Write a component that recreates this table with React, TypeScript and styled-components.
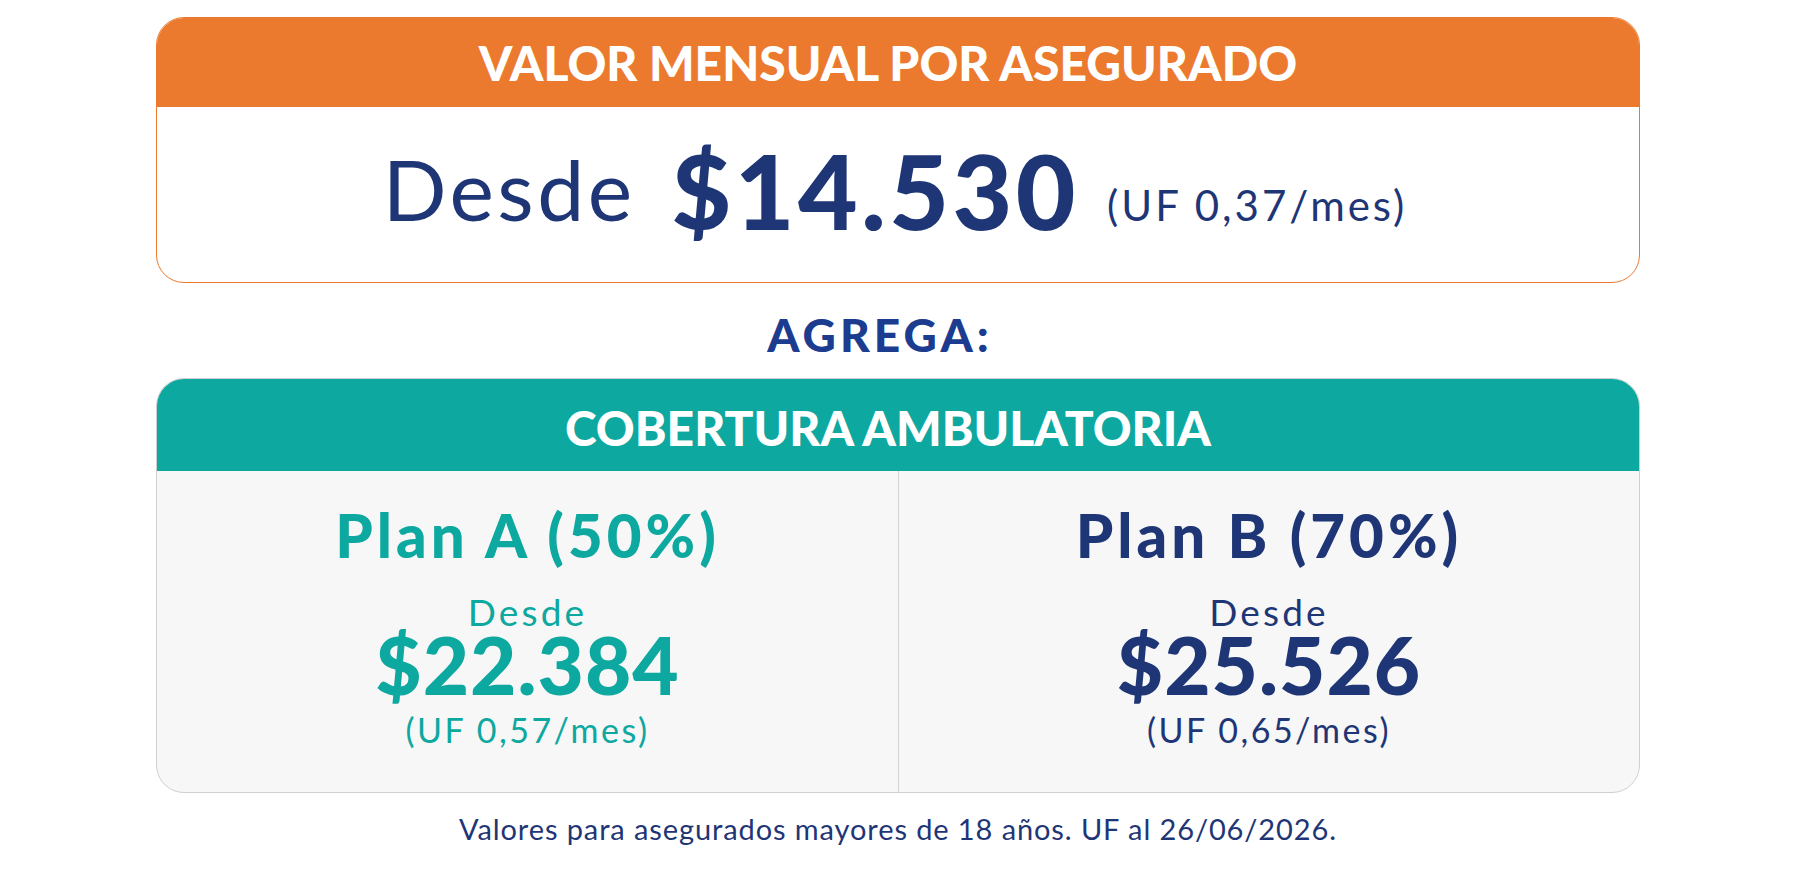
import React from "react";
import styled, { createGlobalStyle } from "styled-components";

const GlobalStyle = createGlobalStyle`
  html, body { margin: 0; padding: 0; background: #ffffff; }
  body { font-family: "Lato", "Noto Sans", sans-serif; }
  * { box-sizing: border-box; }
`;

const ORANGE = "#ec7a2e";
const TEAL = "#0da89f";
const NAVY = "#1f3676";
const BLUE = "#1b3c8f";

const Page = styled.div`
  width: 1796px;
  height: 876px;
  padding-top: 17px;
  display: flex;
  flex-direction: column;
  align-items: center;
`;

const Card = styled.section<{ $line: string; $bg: string }>`
  width: 1484px;
  border-radius: 28px;
  overflow: hidden;
  background: ${(p) => p.$bg};
  border: 1.5px solid ${(p) => p.$line};
  display: flex;
  flex-direction: column;
`;

const CardHeader = styled.header<{ $bg: string; $h: number; $shift: number }>`
  height: ${(p) => p.$h}px;
  margin: -1.5px -1.5px 0;
  background: ${(p) => p.$bg};
  display: flex;
  align-items: center;
  justify-content: center;
  padding-top: ${(p) => p.$shift}px;
  padding-right: 20px;
`;

const HeaderTitle = styled.h2`
  margin: 0;
  font-family: "Lato", sans-serif;
  font-weight: 900;
  font-size: 48px;
  line-height: 1;
  color: #ffffff;
  letter-spacing: 0;
  white-space: nowrap;
`;

const PriceBody = styled.div`
  height: 175px;
  padding: 32px 6px 0 0;
  text-align: center;
  white-space: nowrap;
  color: ${NAVY};
  font-size: 84px;
  line-height: 1;
`;

const DesdeBig = styled.span`
  font-weight: 400;
  font-size: 84px;
  letter-spacing: 3.5px;
`;

const AmountBig = styled.span`
  font-weight: 900;
  font-size: 103px;
  vertical-align: -9px;
  margin: 0 28px 0 36px;
  letter-spacing: 3.5px;
`;

const UfBig = styled.span`
  font-weight: 400;
  font-size: 42px;
  letter-spacing: 3px;
`;

const Agrega = styled.h3`
  margin: 29px 0 20px;
  padding-right: 36px;
  font-weight: 900;
  font-size: 46px;
  line-height: 1;
  color: ${BLUE};
  letter-spacing: 4px;
`;

const Columns = styled.div`
  height: 321px;
  display: grid;
  grid-template-columns: 1fr 1fr;
`;

const Column = styled.div<{ $color: string; $divider?: boolean }>`
  display: flex;
  flex-direction: column;
  align-items: center;
  padding-top: 34px;
  color: ${(p) => p.$color};
  border-left: ${(p) => (p.$divider ? "1.5px solid #d4d4d4" : "none")};
  white-space: nowrap;
`;

const PlanTitle = styled.div`
  font-weight: 900;
  font-size: 60px;
  line-height: 1;
  letter-spacing: 4px;
`;

const DesdeSmall = styled.div`
  margin-top: 28px;
  font-weight: 400;
  font-size: 37px;
  line-height: 1;
  letter-spacing: 3.2px;
`;

const AmountSmall = styled.div`
  font-weight: 900;
  font-size: 80px;
  line-height: 0.85;
  letter-spacing: 1px;
`;

const UfSmall = styled.div`
  margin-top: 15px;
  font-weight: 400;
  font-size: 34px;
  line-height: 1;
  letter-spacing: 2.5px;
`;

const Footnote = styled.p`
  margin: 21px 0 0;
  font-weight: 400;
  font-size: 29px;
  line-height: 1;
  color: ${NAVY};
  letter-spacing: 0.9px;
`;

const plans = [
  { title: "Plan A (50%)", amount: "$22.384", uf: "(UF 0,57/mes)", color: TEAL },
  { title: "Plan B (70%)", amount: "$25.526", uf: "(UF 0,65/mes)", color: NAVY },
];

export default function App() {
  return (
    <>
      <GlobalStyle />
      <Page>
        <Card $line={ORANGE} $bg="#ffffff">
          <CardHeader $bg={ORANGE} $h={90} $shift={3}>
            <HeaderTitle>VALOR MENSUAL POR ASEGURADO</HeaderTitle>
          </CardHeader>
          <PriceBody>
            <DesdeBig>Desde</DesdeBig>
            <AmountBig>$14.530</AmountBig>
            <UfBig>(UF 0,37/mes)</UfBig>
          </PriceBody>
        </Card>
        <Agrega>AGREGA:</Agrega>
        <Card $line="#cfcfcf" $bg="#f7f7f7">
          <CardHeader $bg={TEAL} $h={94} $shift={7}>
            <HeaderTitle>COBERTURA AMBULATORIA</HeaderTitle>
          </CardHeader>
          <Columns>
            {plans.map((p, i) => (
              <Column key={p.title} $color={p.color} $divider={i > 0}>
                <PlanTitle>{p.title}</PlanTitle>
                <DesdeSmall>Desde</DesdeSmall>
                <AmountSmall>{p.amount}</AmountSmall>
                <UfSmall>{p.uf}</UfSmall>
              </Column>
            ))}
          </Columns>
        </Card>
        <Footnote>Valores para asegurados mayores de 18 años. UF al 26/06/2026.</Footnote>
      </Page>
    </>
  );
}
